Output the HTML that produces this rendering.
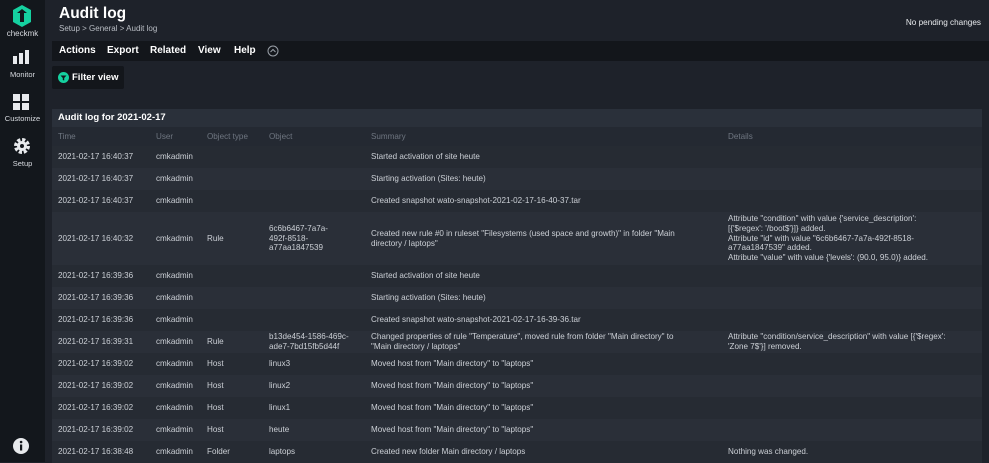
<!DOCTYPE html>
<html><head><meta charset="utf-8"><style>
*{margin:0;padding:0;box-sizing:border-box}
body{width:989px;height:462px;overflow:hidden;background:#1e222a;font-family:"Liberation Sans",sans-serif;color:#c9cdd3;position:relative}
#side{position:absolute;left:0;top:0;width:45px;height:462px;background:#13171c}
.si{position:absolute;left:0;width:45px;text-align:center;font-size:7.5px;color:#d8dbe0}
h1{position:absolute;left:59px;top:5px;font-size:15.5px;font-weight:bold;color:#fff}
.bc{position:absolute;left:59px;top:24px;font-size:8px;color:#b9bdc4}
.np{position:absolute;right:8px;top:18px;font-size:8.2px;color:#e8eaed}
#menu{position:absolute;left:52px;top:41px;width:937px;height:20px;background:#13161b;font-size:10px;font-weight:bold;color:#fff}
#menu span{position:absolute;top:4px}
#filter{position:absolute;left:52px;top:66px;width:72px;height:23px;background:#13161b;border-radius:2px;font-size:9.5px;font-weight:bold;color:#fff}
#tbl{position:absolute;left:52px;top:109px;width:930px}
.cap{height:18px;background:#2a303a;font-size:9.5px;font-weight:bold;color:#fff;padding:3px 0 0 6px}
table{border-collapse:collapse;width:930px;table-layout:fixed;font-size:8.1px}
td,th{padding:0 0 0 6px;vertical-align:middle;line-height:9.7px;white-space:nowrap;overflow:hidden}
th{height:19px;font-weight:normal;text-align:left;color:#6f7681;background:#242932}
tr.a td{background:#262b33}
tr.b td{background:#2a2f38}
td{height:22px;color:#ccd0d6}
</style></head><body>
<div id="side">
<svg style="position:absolute;left:11px;top:4px" width="22" height="24" viewBox="0 0 22 24"><path d="M11 1 L20 6 L20 18 L11 23 L2 18 L2 6 Z" fill="#15d1a0"/><path d="M6 9 L11 5 L16 9 L13 9 L13 18 L9 18 L9 9 Z" fill="#13171c"/></svg>
<div class="si" style="top:29px;font-size:8px">checkmk</div>
<svg style="position:absolute;left:13px;top:50px" width="18" height="14"><rect x="0" y="6" width="4" height="8" fill="#e8eaed"/><rect x="6" y="3" width="4" height="11" fill="#e8eaed"/><rect x="12" y="0" width="4" height="14" fill="#e8eaed"/></svg>
<div class="si" style="top:70px">Monitor</div>
<svg style="position:absolute;left:13px;top:94px" width="18" height="16"><rect x="0" y="0" width="7" height="7" fill="#e8eaed"/><rect x="9" y="0" width="7" height="7" fill="#e8eaed"/><rect x="0" y="9" width="7" height="7" fill="#e8eaed"/><rect x="9" y="9" width="7" height="7" fill="#e8eaed"/></svg>
<div class="si" style="top:114px">Customize</div>
<svg style="position:absolute;left:13px;top:137px" width="18" height="18" viewBox="0 0 18 18"><circle cx="9" cy="9" r="6" fill="none" stroke="#e8eaed" stroke-width="4" stroke-dasharray="3 1.7"/><circle cx="9" cy="9" r="5" fill="#e8eaed"/><circle cx="9" cy="9" r="2" fill="#13171c"/></svg>
<div class="si" style="top:159px">Setup</div>
<svg style="position:absolute;left:12px;top:437px" width="18" height="18"><circle cx="9" cy="9" r="8" fill="#e8eaed"/><rect x="8" y="7.5" width="2.2" height="6" fill="#13171c"/><circle cx="9.1" cy="5" r="1.3" fill="#13171c"/></svg>
</div>
<h1>Audit log</h1>
<div class="bc">Setup &gt; General &gt; Audit log</div>
<div class="np">No pending changes</div>
<div id="menu"><span style="left:7px">Actions</span><span style="left:55px">Export</span><span style="left:98px">Related</span><span style="left:146px">View</span><span style="left:182px">Help</span>
<svg style="position:absolute;left:215px;top:4px" width="12" height="12"><circle cx="6" cy="6" r="5" fill="none" stroke="#9aa0a8" stroke-width="1"/><path d="M3.5 7 L6 4.5 L8.5 7" fill="none" stroke="#9aa0a8" stroke-width="1"/></svg></div>
<div id="filter"><svg style="position:absolute;left:6px;top:6px" width="11" height="11"><circle cx="5.5" cy="5.5" r="5.5" fill="#15d1a0"/><path d="M2.5 3.5 H8.5 L6.2 6 V8.5 L4.8 8 V6 Z" fill="#13161b"/></svg><span style="position:absolute;left:20px;top:6px">Filter view</span></div>
<div id="tbl">
<div class="cap">Audit log for 2021-02-17</div>
<table>
<colgroup><col style="width:98px"><col style="width:51px"><col style="width:62px"><col style="width:102px"><col style="width:357px"><col></colgroup>
<tr><th>Time</th><th>User</th><th>Object type</th><th>Object</th><th>Summary</th><th>Details</th></tr>
<tr class="a"><td>2021-02-17 16:40:37</td><td>cmkadmin</td><td></td><td></td><td>Started activation of site heute</td><td></td></tr>
<tr class="b"><td>2021-02-17 16:40:37</td><td>cmkadmin</td><td></td><td></td><td>Starting activation (Sites: heute)</td><td></td></tr>
<tr class="a"><td>2021-02-17 16:40:37</td><td>cmkadmin</td><td></td><td></td><td>Created snapshot wato-snapshot-2021-02-17-16-40-37.tar</td><td></td></tr>
<tr class="b"><td style="height:53px">2021-02-17 16:40:32</td><td>cmkadmin</td><td>Rule</td><td>6c6b6467-7a7a-<br>492f-8518-<br>a77aa1847539</td><td>Created new rule #0 in ruleset "Filesystems (used space and growth)" in folder "Main<br>directory / laptops"</td><td>Attribute "condition" with value {'service_description':<br>[{'$regex': '/boot$'}]} added.<br>Attribute "id" with value "6c6b6467-7a7a-492f-8518-<br>a77aa1847539" added.<br>Attribute "value" with value {'levels': (90.0, 95.0)} added.</td></tr>
<tr class="a"><td>2021-02-17 16:39:36</td><td>cmkadmin</td><td></td><td></td><td>Started activation of site heute</td><td></td></tr>
<tr class="b"><td>2021-02-17 16:39:36</td><td>cmkadmin</td><td></td><td></td><td>Starting activation (Sites: heute)</td><td></td></tr>
<tr class="a"><td>2021-02-17 16:39:36</td><td>cmkadmin</td><td></td><td></td><td>Created snapshot wato-snapshot-2021-02-17-16-39-36.tar</td><td></td></tr>
<tr class="b"><td>2021-02-17 16:39:31</td><td>cmkadmin</td><td>Rule</td><td>b13de454-1586-469c-<br>ade7-7bd15fb5d44f</td><td>Changed properties of rule "Temperature", moved rule from folder "Main directory" to<br>"Main directory / laptops"</td><td>Attribute "condition/service_description" with value [{'$regex':<br>'Zone 7$'}] removed.</td></tr>
<tr class="a"><td>2021-02-17 16:39:02</td><td>cmkadmin</td><td>Host</td><td>linux3</td><td>Moved host from "Main directory" to "laptops"</td><td></td></tr>
<tr class="b"><td>2021-02-17 16:39:02</td><td>cmkadmin</td><td>Host</td><td>linux2</td><td>Moved host from "Main directory" to "laptops"</td><td></td></tr>
<tr class="a"><td>2021-02-17 16:39:02</td><td>cmkadmin</td><td>Host</td><td>linux1</td><td>Moved host from "Main directory" to "laptops"</td><td></td></tr>
<tr class="b"><td>2021-02-17 16:39:02</td><td>cmkadmin</td><td>Host</td><td>heute</td><td>Moved host from "Main directory" to "laptops"</td><td></td></tr>
<tr class="a"><td>2021-02-17 16:38:48</td><td>cmkadmin</td><td>Folder</td><td>laptops</td><td>Created new folder Main directory / laptops</td><td>Nothing was changed.</td></tr>
</table></div>
</body></html>
